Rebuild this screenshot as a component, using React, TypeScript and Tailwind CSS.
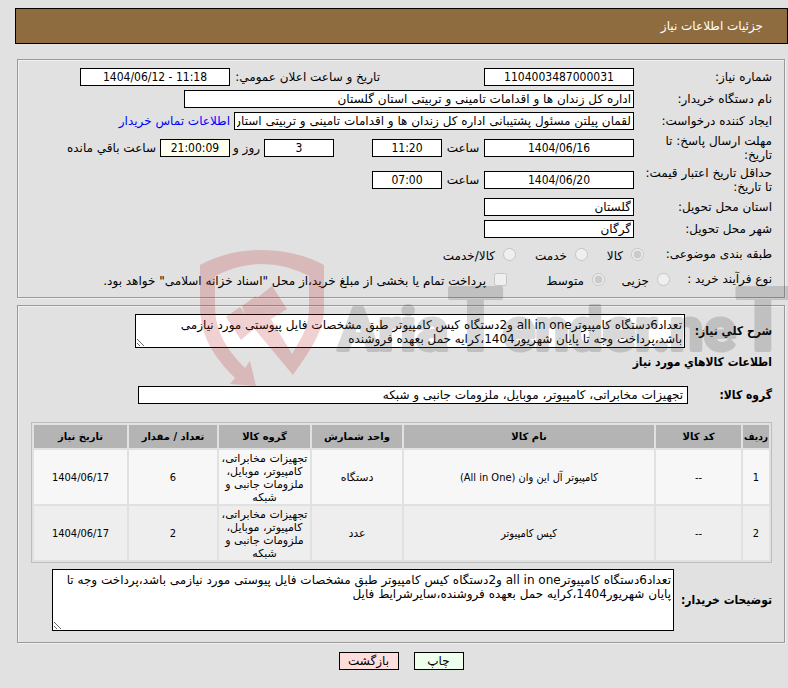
import React from "react";

const field =
  "h-[18px] min-w-0 shrink-0 border border-black bg-white px-[2px] text-[12px] leading-[14px]";

const numeric = "text-center font-['DejaVu_Sans_Condensed','DejaVu_Sans',sans-serif]";

const strong = "text-[12px] font-bold whitespace-nowrap";

type FieldProps = {
  id: string;
  value: string;
  className: string;
  label?: string;
};

function Field({ id, value, className, label }: FieldProps) {
  return (
    <input
      id={id}
      type="text"
      readOnly
      defaultValue={value}
      aria-label={label}
      className={`${field} ${className}`}
    />
  );
}

function RowLabel({ htmlFor, children }: { htmlFor: string; children: React.ReactNode }) {
  return (
    <label htmlFor={htmlFor} className="w-[138px] shrink-0 pl-2 leading-[14px]">
      {children}
    </label>
  );
}

type ChoiceProps = {
  label: string;
  name: string;
  checked?: boolean;
  className: string;
  type?: "radio" | "checkbox";
};

function Choice({ label, name, checked, className, type = "radio" }: ChoiceProps) {
  return (
    <label className={`flex shrink-0 items-center gap-2 whitespace-nowrap ${className}`}>
      <input type={type} name={name} disabled defaultChecked={checked} className="m-0 size-[13px] shrink-0" />
      <span className="pt-1">{label}</span>
    </label>
  );
}

const groupText = "تجهیزات مخابراتی، کامپیوتر، موبایل، ملزومات جانبی و شبکه";

const items = [
  { row: "1", code: "--", name: "کامپیوتر آل این وان (All in One)", unit: "دستگاه", count: "6", date: "1404/06/17" },
  { row: "2", code: "--", name: "کیس کامپیوتر", unit: "عدد", count: "2", date: "1404/06/17" },
];

const condensed = "font-['DejaVu_Sans_Condensed','DejaVu_Sans',sans-serif]";

const panel =
  "border border-[#9a9a9a] shadow-[1px_1px_0_#f0f0f0,inset_1px_1px_0_#f0f0f0] pr-3";

function Watermark() {
  return (
    <svg
      className="pointer-events-none absolute top-[245px] left-[195px] h-[150px] w-[593px]"
      viewBox="195 245 593 150"
      aria-hidden="true"
    >
      <g fill="#b81c1c" opacity="0.2">
        <path
          fillRule="evenodd"
          d="M200 265Q228 250 262 250T324 265V308C324 330 312 348 293 375L247 320L242 306L256 296L269 316L292 354C303 336 309 325 309 308V276Q286 264 262 264T215 276V306C215 333 229 352 245 368L250 361L256 386L230 384L235 378C214 357 200 336 200 306Z"
        />
        <path d="M226 317L240 307L255 328L241 340Z" />
        <path d="M257 298L272 286L287 309L271 319Z" />
      </g>
      <text
        x="338"
        y="350"
        direction="ltr"
        fill="#404040"
        stroke="#404040"
        strokeWidth="4"
        strokeLinejoin="round"
        opacity="0.2"
        fontSize="60"
        fontWeight="700"
        fontFamily="Roboto, 'Liberation Sans', sans-serif"
      >
        Aria<tspan fontSize="88">T</tspan>ender.ne<tspan fontSize="88">T</tspan>
      </text>
    </svg>
  );
}

export default function App() {
  return (
    <div
      dir="rtl"
      className="relative min-h-screen overflow-hidden bg-[#e1e1e1] pt-[8px] pl-[15px] font-['DejaVu_Sans',sans-serif] text-[12px] text-black"
    >
      <header className="flex h-9 items-center border border-black bg-[#8f6c40] pr-6 text-white">
        <h1>جزئیات اطلاعات نیاز</h1>
      </header>

      <main className="mt-[15px] mr-[3px] ml-[2px]">
        <section className={`${panel} pt-[6px] pb-[7px]`}>
          <div className="flex h-[22px] items-center">
            <RowLabel htmlFor="number">شماره نیاز:</RowLabel>
            <Field id="number" value="1104003487000031" className={`w-[150px] ${numeric}`} />
            <label htmlFor="announce" className="mr-[104px] w-[150px] shrink-0 whitespace-nowrap">
              تاریخ و ساعت اعلان عمومي:
            </label>
            <Field id="announce" value="1404/06/12 - 11:18" className={`w-[150px] [direction:ltr] ${numeric}`} />
          </div>
          <div className="flex h-[22px] items-center">
            <RowLabel htmlFor="org">نام دستگاه خریدار:</RowLabel>
            <Field id="org" value="اداره کل زندان ها و اقدامات تامینی و تربیتی استان گلستان" className="w-[450px]" />
          </div>
          <div className="flex h-[22px] items-center">
            <RowLabel htmlFor="creator">ایجاد کننده درخواست:</RowLabel>
            <Field
              id="creator"
              value="لقمان پیلتن مسئول پشتیبانی اداره کل زندان ها و اقدامات تامینی و تربیتی استان گلستان"
              className="w-[400px]"
            />
            <a href="#contact" className="mr-1 whitespace-nowrap text-[#0000ff]">
              اطلاعات تماس خریدار
            </a>
          </div>
          <div className="flex h-8 items-center">
            <RowLabel htmlFor="deadline">مهلت ارسال پاسخ: تا تاریخ:</RowLabel>
            <Field id="deadline" value="1404/06/16" className={`w-[150px] ${numeric}`} />
            <label htmlFor="deadline-time" className="w-[42px] shrink-0 text-center">
              ساعت
            </label>
            <Field id="deadline-time" value="11:20" className={`w-[70px] ${numeric}`} />
            <Field id="days" label="روز" value="3" className={`mr-[38px] w-[70px] ${numeric}`} />
            <label htmlFor="days" className="w-[34px] shrink-0 pr-1">
              روز و
            </label>
            <Field id="remaining" value="21:00:09" className={`w-[70px] bg-[#fffff0]! ${numeric}`} />
            <label htmlFor="remaining" className="mr-1 whitespace-nowrap">
              ساعت باقي مانده
            </label>
          </div>
          <div className="flex h-8 items-center">
            <RowLabel htmlFor="validity">حداقل تاریخ اعتبار قیمت: تا تاریخ:</RowLabel>
            <Field id="validity" value="1404/06/20" className={`w-[150px] ${numeric}`} />
            <label htmlFor="validity-time" className="w-[42px] shrink-0 text-center">
              ساعت
            </label>
            <Field id="validity-time" value="07:00" className={`w-[70px] ${numeric}`} />
          </div>
          <div className="flex h-[22px] items-center">
            <RowLabel htmlFor="province">استان محل تحویل:</RowLabel>
            <Field id="province" value="گلستان" className="w-[150px]" />
          </div>
          <div className="flex h-[22px] items-center">
            <RowLabel htmlFor="city">شهر محل تحویل:</RowLabel>
            <Field id="city" value="گرگان" className="w-[150px]" />
          </div>
          <div role="group" aria-labelledby="category" className="flex h-7 items-center">
            <span id="category" className="w-[128px] shrink-0">
              طبقه بندی موضوعی:
            </span>
            <Choice name="category" label="کالا" checked className="w-[56px]" />
            <Choice name="category" label="خدمت" className="w-[72px]" />
            <Choice name="category" label="کالا/خدمت" className="" />
          </div>
          <div role="group" aria-labelledby="process" className="flex h-[22px] items-center">
            <span id="process" className="w-[102px] shrink-0">
              نوع فرآیند خرید :
            </span>
            <Choice name="process" label="جزیی" className="w-[65px]" />
            <Choice name="process" label="متوسط" checked className="w-[98px]" />
            <Choice
              type="checkbox"
              name="treasury"
              label={'پرداخت تمام یا بخشی از مبلغ خرید،از محل "اسناد خزانه اسلامی" خواهد بود.'}
              className=""
            />
          </div>
        </section>

        <section className={`${panel} mt-[7px] pt-2 pb-[11px]`}>
          <div className="flex items-center">
            <label htmlFor="summary" className={`w-[87px] shrink-0 ${condensed} ${strong}`}>
              شرح کلي نیاز:
            </label>
            <textarea
              id="summary"
              readOnly
              className="h-[34px] w-[550px] overflow-hidden border border-black bg-white px-[2px] py-[3px] text-[12px] leading-[14px]"
              defaultValue="تعداد6دستگاه کامپیوترall in one و2دستگاه کیس کامپیوتر طبق مشخصات فایل پیوستی مورد نیازمی باشد،پرداخت وجه تا پایان شهریور1404،کرایه حمل بعهده فروشنده"
            />
          </div>
          <h2 className={`mt-1 leading-5 ${condensed} ${strong}`}>اطلاعات کالاهاي مورد نیاز</h2>
          <div className="mt-[14px] flex items-center">
            <label htmlFor="group" className={`w-[84px] shrink-0 ${condensed} ${strong}`}>
              گروه کالا:
            </label>
            <Field id="group" value={groupText} className="w-[550px] px-1!" />
          </div>
          <div className="mt-[18px] pl-[13px]">
            <table className="w-full table-fixed border-separate border-spacing-[2px] border border-[#bdbdbd] text-center leading-[13px]">
              <colgroup>
                <col className="w-[26px]" />
                <col className="w-[85px]" />
                <col />
                <col className="w-[90px]" />
                <col className="w-[91px]" />
                <col className="w-[88px]" />
                <col className="w-[93px]" />
              </colgroup>
              <thead>
                <tr className="h-[23px] bg-[#b4b4b4] text-[10px] whitespace-nowrap">
                  <th className={condensed}>ردیف</th>
                  <th>کد کالا</th>
                  <th>نام کالا</th>
                  <th>واحد شمارش</th>
                  <th>گروه کالا</th>
                  <th>تعداد / مقدار</th>
                  <th>تاریخ نیاز</th>
                </tr>
              </thead>
              <tbody>
                {items.map((item) => (
                  <tr key={item.row} className="h-[54px] bg-[#f7f7f7] text-[11px] even:bg-[#eeeeee]">
                    <td className={condensed}>{item.row}</td>
                    <td className={condensed}>{item.code}</td>
                    <td className={condensed}>{item.name}</td>
                    <td>{item.unit}</td>
                    <td className="px-px pt-[2px]">{groupText}</td>
                    <td className={condensed}>{item.count}</td>
                    <td className={condensed}>{item.date}</td>
                  </tr>
                ))}
              </tbody>
            </table>
          </div>
          <div className="mt-[6px] flex items-center">
            <label htmlFor="notes" className={`w-[98px] shrink-0 ${condensed} ${strong}`}>
              توضیحات خریدار:
            </label>
            <textarea
              id="notes"
              readOnly
              className="h-[62px] w-[622px] border border-black bg-white px-[2px] py-[3px] text-[12px] leading-[14px]"
              defaultValue="تعداد6دستگاه کامپیوترall in one و2دستگاه کیس کامپیوتر طبق مشخصات فایل پیوستی مورد نیازمی باشد،پرداخت وجه تا پایان شهریور1404،کرایه حمل بعهده فروشنده،سایرشرایط فایل"
            />
          </div>
        </section>

        <div className="mt-[9px] flex justify-center gap-[15px]">
          <button type="button" className="h-[18px] w-[50px] border border-black bg-[#eeffee] leading-[14px]">
            چاپ
          </button>
          <button type="button" className="h-[18px] w-[60px] border border-black bg-[#ffdddd] leading-[14px]">
            بازگشت
          </button>
        </div>
      </main>
      <Watermark />
    </div>
  );
}
